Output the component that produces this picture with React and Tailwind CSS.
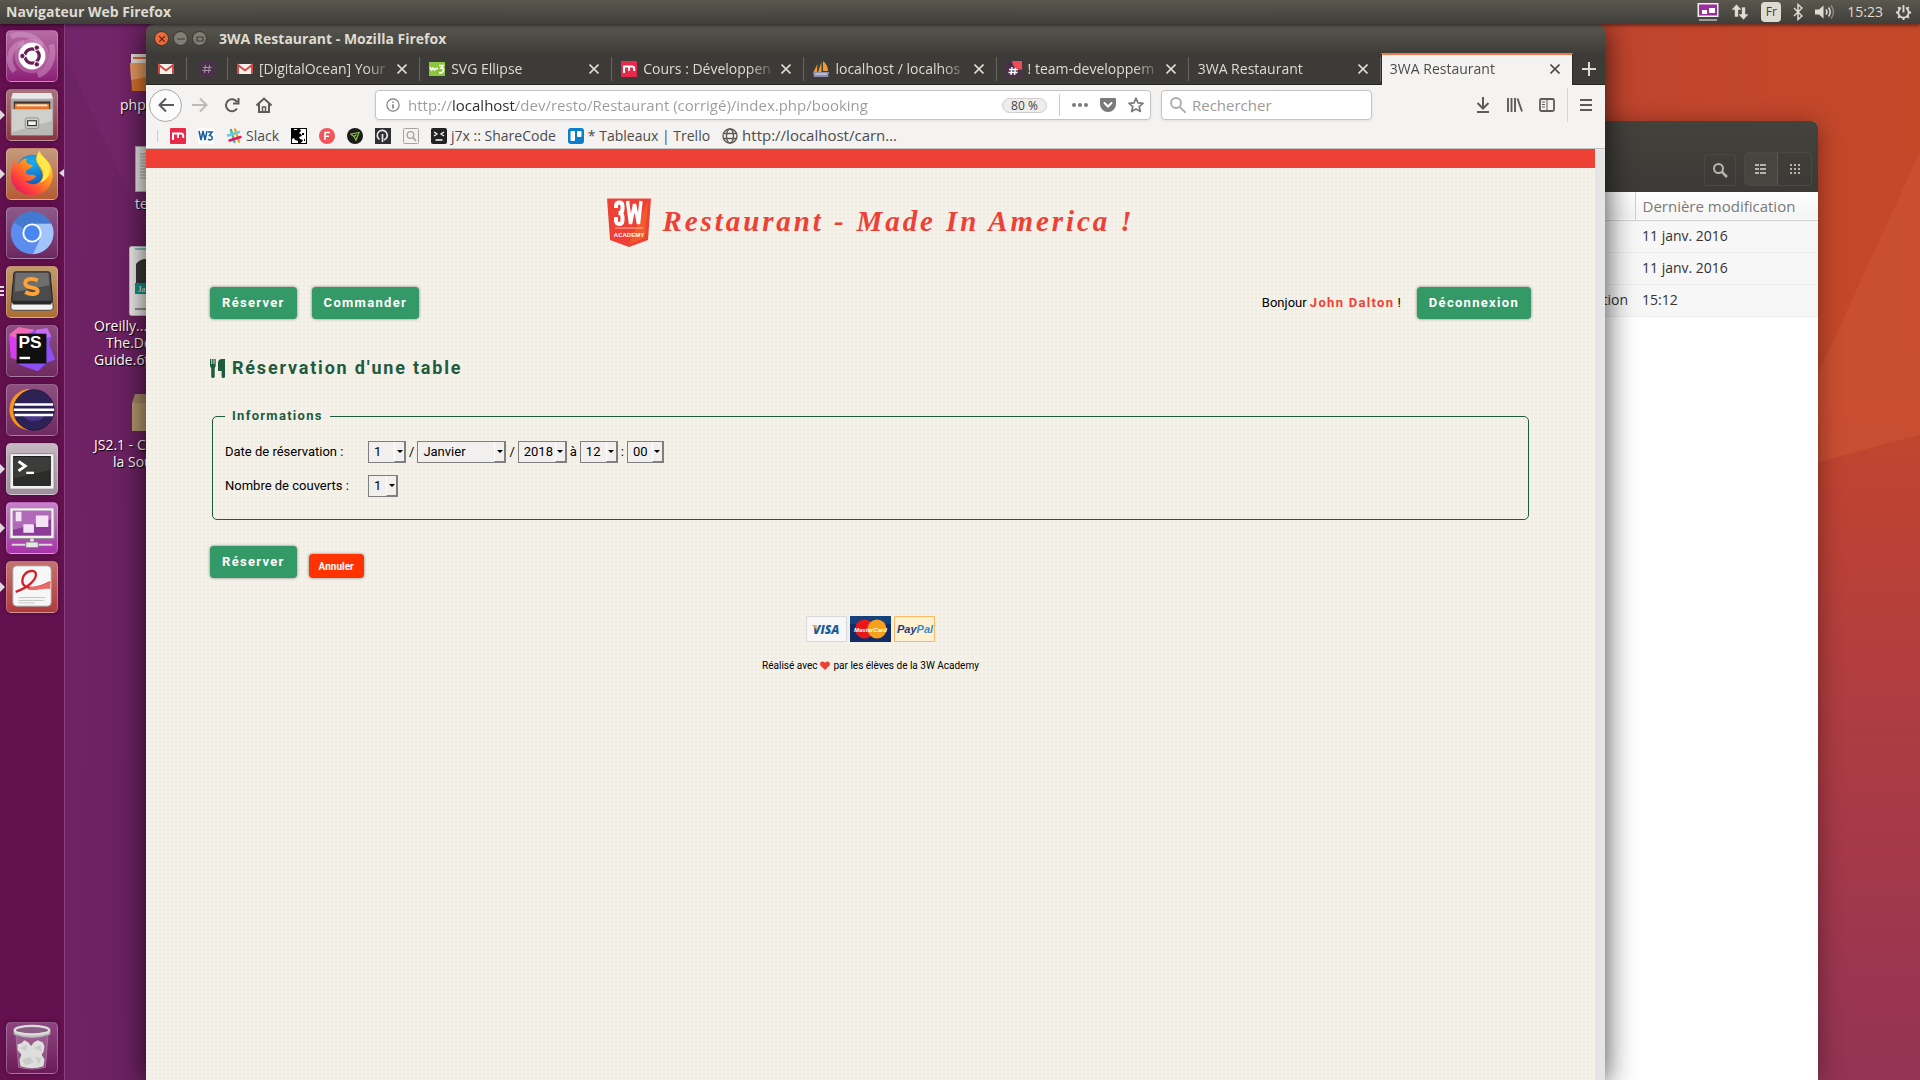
import React from "react";

const UI = "font-['Open_Sans','Noto_Sans',sans-serif]";
const KARLA = "font-['Roboto','Liberation_Sans',sans-serif]";

/* ---------- launcher ---------- */

function Tile({ label, tint, left = 0, active, children }) {
  return (
    <li className="relative flex w-full justify-center">
      {left === 1 && (
        <span className="absolute top-[21px] left-0 border-y-[5px] border-l-[5px] border-y-transparent border-l-[#e0d8dc]" />
      )}
      {left === 3 && (
        <span className="absolute top-5 left-0 flex flex-col gap-0.5">
          <i className="h-0.5 w-1 bg-[#e0d8dc]" />
          <i className="h-0.5 w-1 bg-[#e0d8dc]" />
          <i className="h-0.5 w-1 bg-[#e0d8dc]" />
        </span>
      )}
      {active && (
        <span className="absolute top-[21px] right-0 border-y-4 border-r-[5px] border-y-transparent border-r-[#e0d8dc]" />
      )}
      <button
        aria-label={label}
        className={
          "flex h-[52px] w-[52px] items-center justify-center rounded-[5px] border border-white/25 bg-gradient-to-b shadow-[0_0_4px_rgba(0,0,0,0.3)] " +
          tint
        }
      >
        {children}
      </button>
    </li>
  );
}

const Ubuntu = () => (
  <svg viewBox="0 0 52 52" className="h-[50px] w-[50px]">
    <path d="M4 6C16 0 32 6 36 16M46 14c4 14-2 28-14 32M8 42C-2 30 4 14 18 12" stroke="#d9a3cc" strokeOpacity=".45" strokeWidth="6" fill="none" />
    <circle cx="26" cy="26" r="18" fill="#d7a0cb" fillOpacity=".35" />
    <circle cx="26" cy="26" r="14" fill="#fff" />
    <circle cx="26" cy="26" r="7.5" fill="none" stroke="#6b1d56" strokeWidth="3.4" />
    <path d="M26 26 14 26M26 26l6-10.4M26 26l6 10.4" stroke="#fff" strokeWidth="1.4" />
    <g fill="#6b1d56" stroke="#fff" strokeWidth="1">
      <circle cx="16" cy="26" r="2.8" />
      <circle cx="31" cy="17.3" r="2.8" />
      <circle cx="31" cy="34.7" r="2.8" />
    </g>
  </svg>
);

const FilesIcon = () => (
  <svg viewBox="0 0 52 52" className="h-[50px] w-[50px]">
    <path d="M6 3h40l2 7H4z" fill="#e8e8e8" />
    <path d="M4 9h44v38H4z" fill="#a9a9a7" />
    <path d="M7 12h38v10H7z" fill="#3a2f2a" />
    <path d="M8 14h36v6H8z" fill="#e8762a" />
    <path d="M10 15h32v2H10z" fill="#fbe9d5" />
    <path d="M5 20h42v27H5z" fill="#b9b9b7" />
    <path d="M5 20h42v12L5 44z" fill="#dededc" fillOpacity=".6" />
    <rect x="19" y="29" width="14" height="11" rx="2" fill="#cfcfcd" stroke="#8c8c8a" />
    <rect x="21.500" y="32" width="9" height="5" fill="#f4f4f4" stroke="#333" strokeWidth="1.200" />
  </svg>
);

const FirefoxIcon = () => (
  <svg viewBox="0 0 52 52" className="h-[50px] w-[50px]">
    <defs>
      <linearGradient id="fx" x1="0.9" y1="0" x2="0.1" y2="1">
        <stop offset="0" stopColor="#fff14f" />
        <stop offset=".4" stopColor="#ff9a1c" />
        <stop offset=".75" stopColor="#ff3b3f" />
        <stop offset="1" stopColor="#d5136b" />
      </linearGradient>
      <radialGradient id="fxb" cx=".5" cy=".2" r=".9">
        <stop offset="0" stopColor="#18b0f5" />
        <stop offset="1" stopColor="#123f9c" />
      </radialGradient>
    </defs>
    <circle cx="27" cy="24" r="18" fill="url(#fxb)" />
    <path d="M34 2c0 5 11 10 13 20 3 15-8 26-21 26C13 48 4 39 4 27c0-7 3-9 3-15 2 1 4 3 4 4 3-4 6-6 10-6-1 2-1 4 0 5 2 1 4 1 6 2-1 3-6 4-7 6-1 3 1 3 3 4 3 0 6-1 7 2-3 2-5 5-11 4 4 5 13 5 17-1 4-7-3-13-5-18-2-4 0-9 3-12z" fill="url(#fx)" />
    <path d="M34 2c-6 8-2 12 2 18 3 6 2 11-2 15 8-2 12-10 11-16C44 11 35 8 34 2z" fill="#ffe84a" />
  </svg>
);

const ChromiumIcon = () => (
  <svg viewBox="0 0 52 52" className="h-[50px] w-[50px]">
    <circle cx="26" cy="26" r="22" fill="#5b8def" />
    <path d="M26 16h20A22 22 0 0 1 27 48l8-17z" fill="#a3c3fb" />
    <path d="M26 4a22 22 0 0 1 20 12H26a10 10 0 0 0-9 5L7 15A22 22 0 0 1 26 4z" fill="#4479d0" />
    <circle cx="26" cy="26" r="10" fill="#fff" />
    <circle cx="26" cy="26" r="8" fill="#4a86f0" />
  </svg>
);

const SublimeIcon = () => (
  <svg viewBox="0 0 52 52" className="h-[50px] w-[50px]">
    <path d="M6 18 4 42q0 3 3 3h38q3 0 3-3l-2-24z" fill="#f4f4f4" stroke="#444" />
    <path d="M9 5h34q2 0 2 2l2 28q0 3-3 3H8q-3 0-3-3L7 7q0-2 2-2z" fill="#4b4b4b" stroke="#222" />
    <path d="M9 6h34l1 13L8 26z" fill="#7d7d7d" fillOpacity=".7" />
    <path d="M6 35h40v4H6z" fill="#2a2a2a" />
    <path d="M32 14c-6-3-13-2-13 3 0 6 13 3 13 8 0 4-8 4-13 1" fill="none" stroke="#ffa336" strokeWidth="4" />
  </svg>
);

const PhpStormIcon = () => (
  <svg viewBox="0 0 52 52" className="h-[50px] w-[50px]">
    <path d="m2 9 10-8 16 3-6 30H8z" fill="#f26bb8" />
    <path d="m2 9 8 4v22l-6-2z" fill="#d63ff0" />
    <path d="m28 5 14-2 4 8-2 8 6 16-8 3-10 9-20-7L10 14z" fill="#8b50f5" />
    <path d="M30 4 42 2l4 9-16 4z" fill="#c56cf6" />
    <rect x="10" y="8" width="31" height="31" fill="#101010" />
    <text x="12" y="23" fontFamily="Liberation Sans" fontWeight="700" fontSize="18" fill="#fff">PS</text>
    <path d="M13 32h11v2.500H13z" fill="#fff" />
  </svg>
);

const EclipseIcon = () => (
  <svg viewBox="0 0 52 52" className="h-[50px] w-[50px]">
    <path d="M24 4a21.500 21.500 0 0 0 0 43A24 24 0 0 1 24 4z" fill="#f7941e" />
    <circle cx="28" cy="26" r="21" fill="#2c2255" stroke="#20193f" />
    <path d="M17 32a12 9 0 0 0 22 0z" fill="#4a3a8c" />
    <path d="M8 19h40v2.500H8zM7 24.500h42V27H7zM8 30h40v2.500H8z" fill="#fff" />
  </svg>
);

const TerminalIcon = () => (
  <svg viewBox="0 0 52 52" className="h-[50px] w-[50px]">
    <rect x="3" y="10" width="46" height="37" rx="1" fill="#f0f0f0" stroke="#888" />
    <rect x="7" y="13" width="38" height="30" fill="#2c2c2b" stroke="#111" />
    <path d="M7 13h38v14L7 36z" fill="#fff" fillOpacity=".08" />
    <path d="m12 18 7 5-7 5" fill="none" stroke="#fff" strokeWidth="3" />
    <path d="M20 30h8" stroke="#fff" strokeWidth="2.400" />
  </svg>
);

const ScreenIcon = () => (
  <svg viewBox="0 0 52 52" className="h-[50px] w-[50px]">
    <rect x="3" y="5" width="46" height="32" rx="1" fill="#f1f1ef" stroke="#8d8d8a" />
    <rect x="6" y="8" width="40" height="26" fill="#8c3b97" />
    <path d="M6 8h40v9L6 28z" fill="#c98bcf" fillOpacity=".6" />
    <path d="M9 9h6v10H9zM30 13h13v12H30zM17 22h11v9H17z" fill="#f4e3f4" />
    <path d="M24 37h4v4h-4z" fill="#ddd" />
    <path d="M5 43.500h42" stroke="#d8d8d6" strokeWidth="2" />
    <rect x="19.500" y="40.500" width="13" height="6" rx="1" fill="#e6e6e4" stroke="#777" />
  </svg>
);

const EvinceIcon = () => (
  <svg viewBox="0 0 52 52" className="h-[50px] w-[50px]">
    <rect x="6" y="4" width="40" height="42" rx="4" fill="#f6f6f6" stroke="#999" />
    <path d="M9 31C22 27 31 18 30 12c-1-4-9-4-13 3-3 8 1 12 9 12 8 0 13-3 19-6" fill="none" stroke="#d6202a" strokeWidth="2.400" />
    <path d="M24 26c8 0 14-2 21-6v8c-8-1-14 2-23 1z" fill="#ea6a66" />
    <path d="M12 37h28M12 40h26M12 42.500h17" stroke="#c4c4c4" />
  </svg>
);

const TrashIcon = () => (
  <svg viewBox="0 0 52 52" className="h-[50px] w-[50px]">
    <path d="m9 9 3 37q14 4 28 0l3-37z" fill="#d8c0d3" fillOpacity=".28" stroke="#c9b4c6" strokeOpacity=".4" />
    <path d="m11 22 4-1 3-3 4 2 3 4 3-4 4-2 5 2 2 4-1 6-2 3 3 5-1 7q-12 4-24 0l-1-7 2-5-4-5z" fill="#dededc" />
    <path d="m14 26 7-4-1 7zM28 26l7-3 1 7zM16 38l8-3 4 6-9 3zM29 35l7 2-3 6z" fill="#cbcbc9" />
    <path d="M7 8v4q19 7 38 0V8q-19 7-38 0z" fill="#b9b9b7" />
    <ellipse cx="26" cy="7.500" rx="18" ry="4.500" fill="#8a5f84" stroke="#dcdcda" strokeWidth="2.500" />
  </svg>
);

function Launcher() {
  return (
    <nav aria-label="Lanceur" className="relative z-0 flex w-[65px] shrink-0 flex-col border-r border-[#84437a] bg-[#63104f] pt-1.5 pb-1.5">
      <ul className="flex flex-1 flex-col gap-[7px]">
        <Tile label="Ubuntu" tint="from-[#b66ba5] to-[#8d1d78]"><Ubuntu /></Tile>
        <Tile label="Fichiers" tint="from-[#a8737b] to-[#8a3440]" left={1}><FilesIcon /></Tile>
        <Tile label="Firefox" tint="from-[#c59a7c] to-[#b35c34]" left={1} active><FirefoxIcon /></Tile>
        <Tile label="Chromium" tint="from-[#8d5a8a] to-[#6b2860]"><ChromiumIcon /></Tile>
        <Tile label="Sublime Text" tint="from-[#c19a6c] to-[#ab6f33]" left={3}><SublimeIcon /></Tile>
        <Tile label="PhpStorm" tint="from-[#8d4f80] to-[#6f2a60]"><PhpStormIcon /></Tile>
        <Tile label="Eclipse" tint="from-[#8d4f80] to-[#6f2a60]"><EclipseIcon /></Tile>
        <Tile label="Terminal" tint="from-[#c4b8c2] to-[#9f8f9c]" left={1}><TerminalIcon /></Tile>
        <Tile label="Partage d'écran" tint="from-[#c77fcb] to-[#a732a8]" left={1}><ScreenIcon /></Tile>
        <Tile label="Visionneur" tint="from-[#c67070] to-[#b03a3c]" left={1}><EvinceIcon /></Tile>
        <li className="flex-1" />
        <Tile label="Corbeille" tint="from-[#8d4580] to-[#6b1a5a]"><TrashIcon /></Tile>
      </ul>
    </nav>
  );
}

/* ---------- top panel ---------- */

function Panel() {
  return (
    <header className="relative z-30 flex h-6 items-center justify-between bg-gradient-to-b from-[#5a584f] to-[#3f3e39] pr-2 pl-1.5 text-[#dfdbd2] shadow-[0_1px_4px_rgba(0,0,0,0.6)]">
      <span className="text-sm font-bold">Navigateur Web Firefox</span>
      <div className="flex items-center gap-3">
        <svg viewBox="0 0 22 20" className="h-5 w-[22px]">
          <rect x=".5" y="1" width="21" height="14" fill="#eee" />
          <rect x="2" y="2.500" width="18" height="11" fill="#9b2fa0" />
          <path d="M5 8h5v4H5zM12 6h6v5h-6z" fill="#fff" />
          <path d="M2 18h18M8 18h6" stroke="#bbb" strokeWidth="1.500" />
        </svg>
        <svg viewBox="0 0 18 18" className="h-[18px] w-[18px]" fill="#dfdbd2">
          <path d="M5.500 1 11 7H7.500v7h-4V7H0zM12.500 17 7 11h3.500V4h4v7H18z" stroke="#47463f" strokeWidth=".6" />
        </svg>
        <span className="flex h-5 w-5 items-center justify-center rounded-sm bg-[#dfdbd2] text-xs text-[#3c3b37]">Fr</span>
        <svg viewBox="0 0 10 18" className="h-[18px] w-2.5" fill="none" stroke="#dfdbd2" strokeWidth="1.500">
          <path d="m1 5 8 8-4 3.500v-15L9 5l-8 8" />
        </svg>
        <svg viewBox="0 0 20 16" className="h-4 w-5" fill="none" stroke="#dfdbd2" strokeWidth="1.600">
          <path d="M0 5.500h4l4.500-4v13l-4.500-4H0z" fill="#dfdbd2" stroke="none" />
          <path d="M11 5.500q2 2.500 0 5M13.500 3.500q3.500 4.500 0 9" />
          <path d="M16 1.500q5 6.500 0 13" opacity=".4" />
        </svg>
        <time className="text-sm">15:23</time>
        <svg viewBox="0 0 18 18" className="h-[17px] w-[17px]" fill="none" stroke="#dfdbd2">
          <circle cx="9" cy="9" r="5.500" strokeWidth="2" />
          <path d="M9 0v9" stroke="#4b4a43" strokeWidth="5" />
          <path d="M9 1v8" strokeWidth="2" />
          <path d="M1 9h3M14 9h3M9 17v-3M3.300 3.300l2 2M14.700 3.300l-2 2M3.300 14.700l2-2M14.700 14.700l-2-2" strokeWidth="2" />
        </svg>
      </div>
    </header>
  );
}

/* ---------- desktop ---------- */

function Wallpaper() {
  return (
    <svg aria-hidden="true" preserveAspectRatio="none" viewBox="0 0 1920 1080" className="absolute inset-0 h-full w-full">
      <defs>
        <linearGradient id="wl" x1="0" y1="0" x2="1" y2="0">
          <stop offset="0" stopColor="#6f2469" />
          <stop offset=".08" stopColor="#6c2160" />
          <stop offset=".8" stopColor="#c0442f" />
          <stop offset="1" stopColor="#c54829" />
        </linearGradient>
        <linearGradient id="wr" x1="0" y1="0" x2="0" y2="1">
          <stop offset=".3" stopColor="#c3452c" stopOpacity="0" />
          <stop offset=".45" stopColor="#bd4234" />
          <stop offset=".7" stopColor="#ab3b44" />
          <stop offset="1" stopColor="#933355" />
        </linearGradient>
      </defs>
      <path d="M0 0h1920v1080H0z" fill="url(#wl)" />
      <path d="M1500 0h420v1080h-420z" fill="url(#wr)" />
      <path d="M1920 131 1800 398v55l120-33z" fill="#cf5335" fillOpacity=".6" />
      <path d="M65 32 146 212V0H65z" fill="#7a2b73" fillOpacity=".35" />
    </svg>
  );
}

function DesktopIcons() {
  const label = "whitespace-nowrap text-sm leading-[17px] text-white [text-shadow:1px_1px_1px_#000]";
  return (
    <div>
      <div className="absolute top-[30px] left-[120px] flex flex-col gap-1">
        <svg viewBox="0 0 48 38" className="ml-2.5 h-[38px] w-12">
          <path d="M1 0h46v12H1z" fill="#e8e3dd" />
          <path d="M3 3h44v2H3z" fill="#dc6b3a" />
          <path d="M0 9h48v28H2z" fill="#d8752f" />
          <path d="M0 9h48v8L1 26z" fill="#f3b176" fillOpacity=".7" />
        </svg>
        <span className={label}>php</span>
      </div>
      <div className="absolute top-[122px] left-[135px] flex flex-col gap-[3px]">
        <svg viewBox="0 0 40 46" className="h-[46px] w-10">
          <path d="M.5.500h39v45H.5z" fill="#ecebe9" stroke="#aaa" />
          <path d="M5 8h30M5 11h30M5 14h30M5 17h30M5 20h30M5 23h30M5 26h30M5 29h30M5 32h30" stroke="#aaa" />
        </svg>
        <span className={label}>test</span>
      </div>
      <div className="absolute top-[222px] left-[94px] flex flex-col">
        <svg viewBox="0 0 50 70" className="ml-[35px] h-[70px] w-[50px]">
          <rect x=".5" y=".5" width="49" height="69" rx="2" fill="#f0efec" stroke="#bbb" />
          <path d="M6 3h40" stroke="#1b9a94" />
          <path d="M7 18q6-7 14-4l20 3v20H7z" fill="#3a3a3a" />
          <path d="M6 37h40v11H6z" fill="#14938c" />
          <text x="9" y="46" fontFamily="Liberation Serif" fontSize="9" fill="#fff">Java</text>
          <path d="M6 63h12" stroke="#777" strokeWidth="1.500" />
        </svg>
        <span className={label + " mt-px"}>Oreilly...</span>
        <span className={label + " pl-3"}>The.Def</span>
        <span className={label}>Guide.6th</span>
      </div>
      <div className="absolute top-[370px] left-[94px] flex flex-col">
        <svg viewBox="0 0 48 38" className="mb-1 ml-9 h-[38px] w-12">
          <path d="M5 0h38l4 9H2z" fill="#a58a66" />
          <path d="M2 9h45v28H2z" fill="#b99a70" />
        </svg>
        <span className={label}>JS2.1 - Co</span>
        <span className={label + " pl-[19px]"}>la Sou</span>
      </div>
    </div>
  );
}

function FileRow({ name, date }) {
  return (
    <tr className="h-8 border-b border-[#ececec] bg-[#f7f7f7]">
      <td className="pr-[7px] text-right">{name}</td>
      <td className="pl-[7px]">{date}</td>
    </tr>
  );
}

function FileManager() {
  return (
    <section aria-label="Fichiers" className="absolute top-[97px] right-[102px] bottom-0 flex w-[420px] flex-col overflow-hidden rounded-t-md bg-white shadow-[0_4px_24px_rgba(0,0,0,0.4)]">
      <div className="flex h-[71px] shrink-0 items-end justify-end gap-2 bg-gradient-to-b from-[#43423d] to-[#3b3a36] pr-1.5 pb-1.5">
        <button aria-label="Rechercher un fichier" className="flex h-8 w-8 items-center justify-center rounded border border-[#4a4944]">
          <svg viewBox="0 0 16 16" className="h-4 w-4" fill="none" stroke="#b7b5ab" strokeWidth="2">
            <circle cx="6.500" cy="6.500" r="4.500" />
            <path d="m10 10 5 5" strokeWidth="2.500" />
          </svg>
        </button>
        <div className="flex h-[34px] overflow-hidden rounded border border-[#4a4944]">
          <button aria-label="Liste" className="flex w-[33px] items-center justify-center border-r border-[#5a5953] bg-[#464540]">
            <svg viewBox="0 0 12 12" className="h-3 w-3" fill="#b7b5ab">
              <path d="M0 1h4v2H0zM5 1h6v2H5zM0 5h4v2H0zM5 5h6v2H5zM0 9h4v2H0zM5 9h6v2H5z" />
            </svg>
          </button>
          <button aria-label="Grille" className="flex w-[33px] items-center justify-center">
            <svg viewBox="0 0 12 12" className="h-3 w-3" fill="#b7b5ab">
              <path d="M1 1h2v2H1zM5 1h2v2H5zM9 1h2v2H9zM1 5h2v2H1zM5 5h2v2H5zM9 5h2v2H9zM1 9h2v2H1zM5 9h2v2H5zM9 9h2v2H9z" />
            </svg>
          </button>
        </div>
      </div>
      <table className="w-full table-fixed border-collapse text-sm text-[#333]">
        <thead>
          <tr className="h-7 border-b border-[#cfcfcf] bg-gradient-to-b from-white to-[#f4f4f4] text-[15px] leading-5 text-[#7a7a78]">
            <th scope="col" className="border-r border-[#cfcfcf] font-normal"></th>
            <th scope="col" className="w-[183px] pl-[7px] text-left font-normal">Dernière modification</th>
          </tr>
        </thead>
        <tbody>
          <FileRow name="" date="11 janv. 2016" />
          <FileRow name="" date="11 janv. 2016" />
          <FileRow name="Documentation" date="15:12" />
        </tbody>
      </table>
    </section>
  );
}

/* ---------- favicons ---------- */

const Gmail = () => (
  <svg viewBox="0 0 16 16" className="h-4 w-4 shrink-0">
    <path d="M1 3h14v10H1z" fill="#f1eeec" />
    <path d="M1 13V4l7 5.500L15 4v9" fill="none" stroke="#d54a3f" strokeWidth="2" />
    <path d="M3 13v-6l5 4 5-4v6z" fill="#f4f1ef" />
  </svg>
);
const SlackTab = () => (
  <svg viewBox="0 0 16 16" className="h-4 w-4 shrink-0">
    <path d="M0 0h16v16H0z" fill="#4a3349" />
    <path d="M6.500 4 5.500 12M10.500 4l-1 8M4 6.500h8.500M3.500 9.500H12" stroke="#a493a3" strokeWidth="1" />
  </svg>
);
const W3Green = () => (
  <svg viewBox="0 0 16 16" className="h-4 w-4 shrink-0">
    <path d="M0 1h16v14H0z" fill="#8cc63f" />
    <path d="m1 6 1.500 3L4 7l1.500 2L7 7.500h2M10 4.500h4L12 7q3 0 2.500 2.500T10 12" fill="none" stroke="#fff" strokeWidth="1.500" />
  </svg>
);
const MRed = () => (
  <svg viewBox="0 0 16 16" className="h-4 w-4 shrink-0">
    <rect width="16" height="16" rx="1" fill="#e9294a" />
    <path d="M3 12V5.500h8q2.200 0 2.200 2V10" fill="none" stroke="#fff" strokeWidth="2" />
    <path d="M8 5.500V10" stroke="#fff" strokeWidth="1.800" />
  </svg>
);
const PhpMyAdmin = () => (
  <svg viewBox="0 0 16 16" className="h-4 w-4 shrink-0">
    <path d="M4.500 3 4 11H.5zM8.500 1v10H5zM10 0q5 4 5 10h-5z" fill="#f29b30" />
    <path d="M0 11h16l-1 5H1z" fill="#8d8fae" />
    <path d="M2 13h12" stroke="#e5e5f0" />
  </svg>
);
const SlackRed = () => (
  <svg viewBox="0 0 16 16" className="h-4 w-4 shrink-0">
    <path d="M0 0h16v16H0z" fill="#4a2f4b" />
    <path d="M6 6 5 14M9.500 6l-1 8M3 8.500h9M2.500 11.500h9" stroke="#fff" strokeWidth="1.400" />
    <path d="M6 0h10v9Q7 9 6 0z" fill="#ee4a5a" />
  </svg>
);

/* ---------- Firefox ---------- */

function Cross() {
  return (
    <svg viewBox="0 0 10 10" className="h-2.5 w-2.5" fill="none" stroke="currentColor" strokeWidth="1.600">
      <path d="m.5.500 9 9M9.500.500l-9 9" />
    </svg>
  );
}

function Tab({ icon, title, active }) {
  return (
    <div
      className={
        active
          ? "flex min-w-0 flex-1 items-center border-x border-t-2 border-x-[#2a2926] border-t-[#f07746] bg-[#f4f3f2] pr-3 pb-0.5 pl-2 text-[#4c4c4c]"
          : "my-1 flex min-w-0 flex-1 items-center border-r border-[#67655e] pr-3 pl-[9px] text-[#dfdbd2]"
      }
    >
      {icon && <span className="mr-1.5 shrink-0">{icon}</span>}
      <span className="min-w-0 flex-1 text-sm whitespace-nowrap [mask-image:linear-gradient(to_right,#000_calc(100%-28px),transparent)]">
        {title}
      </span>
      <button aria-label={"Fermer l'onglet " + title} className="ml-1 shrink-0">
        <Cross />
      </button>
    </div>
  );
}

function TabStrip() {
  return (
    <div className="flex h-8 shrink-0 border-b border-[#252522] bg-[#3c3b37]">
      <button aria-label="Gmail" className="my-1 flex w-[41px] items-center justify-center border-r border-[#67655e]"><Gmail /></button>
      <button aria-label="Slack" className="my-1 flex w-[41px] items-center justify-center border-r border-[#67655e]"><SlackTab /></button>
      <div className="-mb-px flex min-w-0 flex-1">
        <Tab icon={<Gmail />} title="[DigitalOcean] Your" />
        <Tab icon={<W3Green />} title="SVG Ellipse" />
        <Tab icon={<MRed />} title="Cours : Développen" />
        <Tab icon={<PhpMyAdmin />} title="localhost / localhos" />
        <Tab icon={<SlackRed />} title="! team-developpem" />
        <Tab title="3WA Restaurant" />
        <Tab title="3WA Restaurant" active />
      </div>
      <button aria-label="Nouvel onglet" className="flex w-8 items-center justify-center text-[#dfdbd2]">
        <svg viewBox="0 0 14 14" className="h-3.5 w-3.5" stroke="currentColor" strokeWidth="2"><path d="M7 0v14M0 7h14" /></svg>
      </button>
    </div>
  );
}

function TitleBar() {
  const dot = "flex h-[15px] w-[15px] items-center justify-center rounded-full border border-[#35342f]";
  return (
    <div className="flex h-[29px] shrink-0 items-center gap-1 bg-gradient-to-b from-[#5a584f] to-[#3e3d39] pl-2">
      <button aria-label="Fermer" className={dot + " bg-[#ee683a] text-[#5a2410]"}>
        <svg viewBox="0 0 6 6" className="h-1.5 w-1.5" stroke="currentColor" strokeWidth="1.200"><path d="m0 0 6 6M6 0 0 6" /></svg>
      </button>
      <button aria-label="Réduire" className={dot + " bg-[#807e75] text-[#3c3b37]"}>
        <svg viewBox="0 0 8 6" className="h-1.5 w-2" stroke="currentColor" strokeWidth="1.200"><path d="M0 3h8" /></svg>
      </button>
      <button aria-label="Agrandir" className={dot + " bg-[#807e75] text-[#3c3b37]"}>
        <svg viewBox="0 0 8 6" className="h-1.5 w-2" fill="none" stroke="currentColor" strokeWidth="1.200"><path d="M1 1h6v4H1z" /></svg>
      </button>
      <h1 className="ml-2 text-sm font-bold text-[#dfdbd2]">3WA Restaurant - Mozilla Firefox</h1>
    </div>
  );
}

function NavBar() {
  const s = "h-4 w-4";
  return (
    <div className="flex h-10 shrink-0 items-center bg-[#f4f3f2] pr-[11px] pl-[3px] text-[#5c5b59]">
      <button aria-label="Précédent" className="flex h-[33px] w-[33px] items-center justify-center rounded-full border border-[#a9a8a6] bg-[#fbfbfb]">
        <svg viewBox="0 0 16 16" className={s} fill="none" stroke="currentColor" strokeWidth="2"><path d="M16 8H1M8 1.500 1.500 8 8 14.500" /></svg>
      </button>
      <button aria-label="Suivant" className="ml-2.5 text-[#bcbbb9]">
        <svg viewBox="0 0 16 16" className={s} fill="none" stroke="currentColor" strokeWidth="2"><path d="M0 8h15M8 1.500 14.500 8 8 14.500" /></svg>
      </button>
      <button aria-label="Actualiser" className="ml-4">
        <svg viewBox="0 0 16 16" className={s} fill="none" stroke="currentColor" strokeWidth="2"><path d="M13 11.500A6 6 0 1 1 13 5M14.500 1v5.500H9" /></svg>
      </button>
      <button aria-label="Accueil" className="ml-4">
        <svg viewBox="0 0 16 16" className={s} fill="none" stroke="currentColor" strokeWidth="2"><path d="m.5 8.500 7.500-7 7.500 7M3 7v8h10V7" /><path d="M6.500 15v-5h3v5" strokeWidth="1.500" /></svg>
      </button>
      <div className="ml-[103px] flex h-[30px] min-w-0 flex-1 items-center rounded border border-[#c5c4c2] bg-white pr-1.5 pl-2.5 shadow-[0_1px_3px_rgba(0,0,0,0.08)]">
        <svg viewBox="0 0 16 16" className="h-3.5 w-3.5 shrink-0" fill="none" stroke="#7b7a78" strokeWidth="1.300"><circle cx="8" cy="8" r="7" /><path d="M8 7v5M8 4v1.500" strokeWidth="1.800" /></svg>
        <input
          aria-label="Adresse"
          defaultValue="http://localhost/dev/resto/Restaurant (corrigé)/index.php/booking"
          className="ml-2 min-w-0 flex-1 bg-[linear-gradient(to_right,#9c9b99_45px,#2a2a2a_45px,#2a2a2a_108px,#9c9b99_108px)] bg-clip-text text-[15px] text-transparent outline-none"
        />
        <button className="w-[45px] rounded-full border border-[#cfcecc] bg-[#eeedec] text-xs leading-[13px] text-[#3f3f3f]">80 %</button>
        <span className="mx-3 h-[22px] w-px bg-[#cfcecc]" />
        <button aria-label="Actions" className="w-4">
          <svg viewBox="0 0 16 16" className={s} fill="#7b7a78"><circle cx="2" cy="8" r="2" /><circle cx="8" cy="8" r="2" /><circle cx="14" cy="8" r="2" /></svg>
        </button>
        <button aria-label="Pocket" className="ml-3">
          <svg viewBox="0 0 16 16" className={s}><path d="M1 1h14q1 0 1 1v5a8 8 0 0 1-16 0V2q0-1 1-1z" fill="#7b7a78" /><path d="m4.500 6 3.500 3.500L11.500 6" fill="none" stroke="#fff" strokeWidth="2" strokeLinecap="round" /></svg>
        </button>
        <button aria-label="Marquer cette page" className="ml-3">
          <svg viewBox="0 0 16 16" className={s} fill="none" stroke="#7b7a78" strokeWidth="1.700" strokeLinejoin="round"><path d="m8 1.200 2 4.600 5 .5-3.800 3.300L12.400 14.500 8 11.900l-4.400 2.600L4.800 9.600 1 6.300l5-.5z" /></svg>
        </button>
      </div>
      <label className="ml-2.5 flex h-[30px] w-[211px] items-center rounded border border-[#c5c4c2] bg-white px-2 shadow-[0_1px_3px_rgba(0,0,0,0.08)]">
        <svg viewBox="0 0 16 16" className={s + " shrink-0"} fill="none" stroke="#aaa9a7" strokeWidth="1.800"><circle cx="6" cy="6" r="5" /><path d="m9.800 9.800 6 6" /></svg>
        <input aria-label="Rechercher" placeholder="Rechercher" className="ml-1.5 w-full min-w-0 bg-transparent text-[15px] outline-none placeholder:text-[#9c9b99]" />
      </label>
      <button aria-label="Téléchargements" className="ml-[103px]">
        <svg viewBox="0 0 16 16" className={s} fill="none" stroke="currentColor" strokeWidth="2"><path d="M8 0v11M2.500 6 8 11.500 13.500 6M2 15h12" /></svg>
      </button>
      <button aria-label="Bibliothèque" className="ml-4">
        <svg viewBox="0 0 16 16" className={s} fill="none" stroke="currentColor" strokeWidth="1.900"><path d="M1 1v14M4.500 1v14M8 1v14M10.500 1.500l4.500 13" /></svg>
      </button>
      <button aria-label="Panneaux latéraux" className="ml-4">
        <svg viewBox="0 0 16 16" className={s} fill="none" stroke="currentColor" strokeWidth="1.800"><rect x="1" y="2" width="14" height="12" rx="1.500" /><path d="M8 2v12M3 5h3M3 7.500h3M3 10h3" strokeWidth="1" /></svg>
      </button>
      <span className="mx-3 h-[34px] w-px bg-[#d8d7d5]" />
      <button aria-label="Menu" className="w-3.5">
        <svg viewBox="0 0 12 14" className="h-3.5 w-3" stroke="currentColor" strokeWidth="2"><path d="M0 2h12M0 7h12M0 12h12" /></svg>
      </button>
    </div>
  );
}

const bookmarks = [
  { name: "Mooc", icon: <MRed /> },
  {
    name: "W3Schools",
    icon: (
      <svg viewBox="0 0 16 16" className="h-4 w-4"><path d="M0 0h16v16H0z" fill="#fff" /><path d="m1 3 2 9 2-9 2 9 2-9M10 4h4l-2.500 3.500Q15 8 14 11q-2 2-4 0" fill="none" stroke="#1b5fa5" strokeWidth="1.600" /></svg>
    ),
  },
  {
    name: "Slack",
    text: "Slack",
    icon: (
      <svg viewBox="0 0 16 16" className="h-4 w-4" strokeWidth="2.400" strokeLinecap="round"><path d="m5 2 3.500 12" stroke="#3eb991" /><path d="m9 1.500 4 12" stroke="#e9a820" /><path d="M2 7.500 13 4" stroke="#70cadb" /><path d="M3.500 12.500 14.500 9" stroke="#e01765" /></svg>
    ),
  },
  {
    name: "Dossier",
    icon: (
      <svg viewBox="0 0 16 16" className="h-4 w-4"><path d="M0 0h16v16H0z" fill="#000" /><path d="M9 1h6v14H9l2-1 1-2-3-1-1-2 3-1-1-2-2-1 2-2zM1 11l2-1 1 2 3 1v2H1zM3 1h3v1H3z" fill="#fff" /><path d="M11 5h2v2h-2zM13 11h1v2h-1z" fill="#000" /></svg>
    ),
  },
  {
    name: "Favori F",
    icon: (
      <svg viewBox="0 0 16 16" className="h-4 w-4"><circle cx="8" cy="8" r="8" fill="#f4535a" /><path d="M6 12V4.500h5M6 8.200h4" fill="none" stroke="#fff" strokeWidth="1.600" /></svg>
    ),
  },
  {
    name: "Favori V",
    icon: (
      <svg viewBox="0 0 16 16" className="h-4 w-4"><circle cx="8" cy="8" r="8" fill="#1b1b1b" /><path d="M3.500 6 12 4.500 9 12 7 8.500 9.500 6.500M3.500 6 7 8.500" fill="none" stroke="#8bc53f" strokeWidth="1.200" /></svg>
    ),
  },
  {
    name: "Favori P",
    icon: (
      <svg viewBox="0 0 16 16" className="h-4 w-4"><path d="M0 0h16v16H0z" fill="#2e3033" /><path d="M7.500 14V6M4.500 11.500A5 5 0 1 1 9 12" fill="none" stroke="#e8e8e8" strokeWidth="1.700" /></svg>
    ),
  },
  {
    name: "Recherche",
    icon: (
      <svg viewBox="0 0 16 16" className="h-4 w-4" fill="none" stroke="#a5a4a2"><rect x=".5" y=".5" width="15" height="15" rx="1" /><circle cx="7.500" cy="7" r="3.300" strokeWidth="1.300" /><path d="m10 9.500 3 3.500" strokeWidth="1.800" /></svg>
    ),
  },
  {
    name: "ShareCode",
    text: "j7x :: ShareCode",
    icon: (
      <svg viewBox="0 0 16 16" className="h-4 w-4"><rect width="16" height="16" rx="2" fill="#222" /><path d="m3 4 3 2-3 2M13 4l-3 2 3 2M4.500 12h7" fill="none" stroke="#fff" strokeWidth="1.300" /></svg>
    ),
  },
  {
    name: "Trello",
    text: "* Tableaux | Trello",
    icon: (
      <svg viewBox="0 0 16 16" className="h-4 w-4"><rect width="16" height="16" rx="3" fill="#0a80cc" /><rect x="2.500" y="3" width="4.500" height="10" rx="1" fill="#fff" /><rect x="9" y="3" width="4.500" height="6" rx="1" fill="#fff" /></svg>
    ),
  },
  {
    name: "localhost",
    text: "http://localhost/carn…",
    icon: (
      <svg viewBox="0 0 16 16" className="h-4 w-4" fill="none" stroke="#5c5b59" strokeWidth="1.400"><circle cx="8" cy="8" r="7" /><ellipse cx="8" cy="8" rx="3.500" ry="7" /><path d="M1.500 5.500h13M1.500 10.500h13" /></svg>
    ),
  },
];

function BookmarkBar() {
  return (
    <div className="flex h-6 shrink-0 items-center gap-3 border-b border-[#c4c3c1] bg-[#f4f3f2] pb-0.5 pl-[11px] text-sm text-[#4c4c4c]">
      <span className="h-3 w-px bg-[#d0cfcd]" />
      {bookmarks.map((b) => (
        <a key={b.name} href="#" aria-label={b.name} className="flex items-center gap-1 whitespace-nowrap last:text-[15px]">
          {b.icon}
          {b.text}
        </a>
      ))}
    </div>
  );
}

/* ---------- the restaurant page ---------- */

const green = "h-8 rounded bg-[#339966] px-3 text-[13px] font-bold tracking-widest text-white shadow-[0_0_3px_rgba(0,0,0,0.5)]";

function Choice({ id, label, options, className }) {
  return (
    <span className="relative inline-flex">
      <select
        id={id}
        aria-label={label}
        className={"h-[22px] appearance-none border border-r-2 border-[#7f7f7f] bg-[#f1f0ef] pl-[5px] text-[13px] text-black " + className}
      >
        {options.map((o) => (
          <option key={o}>{o}</option>
        ))}
      </select>
      <span className="pointer-events-none absolute top-px right-0.5 bottom-px flex w-2.5 items-center justify-center border-b border-l border-b-[#7f7f7f] border-l-white bg-[#f1f0ef]">
        <i className="border-x-[3px] border-t-[3px] border-x-transparent border-t-black" />
      </span>
    </span>
  );
}

function Badge() {
  return (
    <svg viewBox="0 0 44 49" className="h-[49px] w-11" role="img" aria-label="3W Academy">
      <path d="M0 0h44l-3 42-19 7-19-7z" fill="#ef4036" />
      <path d="M41 3 22 46l16-6z" fill="#f15a29" />
      <path d="M0 0h44v1H0z" fill="#f4a09a" />
      <g fill="none" stroke="#fff" strokeWidth="4">
        <path d="M9 10V8q0-3.500 3.200-3.500T15.500 8v3q0 4-4 4 4 0 4 4v3q0 4-3.300 4T9 22v-3" />
        <path d="m20.500 3 3 23 4-20 4 20L34 3" strokeWidth="3.400" />
      </g>
      <path d="M8 30h28" stroke="#f9b8a8" strokeWidth="1" />
      <text x="22" y="39" textAnchor="middle" fontFamily="Liberation Sans" fontWeight="700" fontSize="6" fill="#fff">ACADEMY</text>
    </svg>
  );
}

function Cutlery() {
  return (
    <svg viewBox="0 0 16 19" className="h-[19px] w-4" fill="#1e5b3e">
      <path d="M0 0h1.300v5h.9V0h1.300v5h.9V0h1.300v6.500Q5.500 8.300 4.700 9v8.500Q4.700 19 3 19t-1.800-1.500V9Q0 8.300 0 6.500zM15 0v17.500q0 1.500-1.700 1.500t-1.700-1.500V12H8V4q0-4 4-4z" />
    </svg>
  );
}

function Cards() {
  return (
    <div className="flex gap-[3px]">
      <svg viewBox="0 0 41 26" className="h-[26px] w-[41px]" role="img" aria-label="Visa">
        <path d="M.5.500h40v25H.5z" fill="#f7f7f7" stroke="#d8d8d8" />
        <text x="7" y="18" fontFamily="Open Sans" fontStyle="italic" fontWeight="800" fontSize="12" fill="#1a5a9a">VISA</text>
        <path d="M6 9h4l1 5z" fill="#f0a92b" />
      </svg>
      <svg viewBox="0 0 41 26" className="h-[26px] w-[41px]" role="img" aria-label="MasterCard">
        <path d="M0 0h41v26H0z" fill="#142a63" />
        <path d="M0 0h41v8H0z" fill="#14508c" fillOpacity=".6" />
        <circle cx="14.500" cy="13" r="9.500" fill="#e8171c" />
        <circle cx="27" cy="13" r="9.500" fill="#f7a01d" />
        <text x="20.500" y="15.500" textAnchor="middle" fontFamily="Liberation Sans" fontStyle="italic" fontWeight="700" fontSize="6" fill="#fff">MasterCard</text>
      </svg>
      <svg viewBox="0 0 41 26" className="h-[26px] w-[41px]" role="img" aria-label="PayPal">
        <path d="M.5.500h40v25H.5z" fill="#fff1d2" stroke="#fdb863" />
        <text x="3" y="17" fontFamily="Liberation Sans" fontStyle="italic" fontWeight="700" fontSize="11" fill="#1b3d7c">Pay<tspan fill="#2f8fcf">Pal</tspan></text>
      </svg>
    </div>
  );
}

function Page() {
  const days = Array.from({ length: 31 }, (_, i) => String(i + 1));
  return (
    <div
      className={
        KARLA +
        " min-w-0 flex-1 border-t-[19px] border-[#ef4036] bg-[#f4f1e9] bg-[radial-gradient(circle,#f0ece3_1px,transparent_1px)] bg-[length:4px_4px] px-16 text-[13px] text-black"
      }
    >
      <div className="mt-[30px] flex items-center justify-center gap-3 text-[#ef4036]">
        <Badge />
        <h2 className="pb-1 font-['Liberation_Serif',serif] text-[29px] leading-9 font-bold tracking-widest italic">Restaurant - Made In America !</h2>
      </div>
      <div className="mt-10 flex items-center justify-between">
        <div className="flex gap-[15px]">
          <button className={green}>Réserver</button>
          <button className={green}>Commander</button>
        </div>
        <div className="flex items-center gap-4">
          <p>
            Bonjour <strong className="tracking-widest text-[#ef4036]">John Dalton</strong> !
          </p>
          <button className={green}>Déconnexion</button>
        </div>
      </div>
      <h3 className="mt-[35px] flex items-center gap-1.5 text-lg font-bold tracking-widest text-[#1e5b3e]">
        <Cutlery />
        Réservation d'une table
      </h3>
      <form onSubmit={(e) => e.preventDefault()}>
        <fieldset className="mx-0.5 mt-[25px] rounded-[5px] border border-[#1e5b3e] px-3 pb-[22px]">
          <legend className="px-[7px] text-[13px] leading-[18px] font-bold tracking-widest text-[#1e5b3e]">Informations</legend>
          <div className="mt-4 flex items-center gap-[3px]">
            <label htmlFor="jour" className="w-[140px]">Date de réservation :</label>
            <Choice id="jour" options={days} className="w-[38px]" />
            /
            <Choice label="Mois" options={["Janvier", "Février", "Mars"]} className="w-[89px]" />
            /
            <Choice label="Année" options={["2018", "2019"]} className="w-[49px]" />
            à
            <Choice label="Heure" options={["12", "13", "14"]} className="w-[38px]" />
            :
            <Choice label="Minutes" options={["00", "15", "30", "45"]} className="w-[37px]" />
          </div>
          <div className="mt-3 flex items-center gap-[3px]">
            <label htmlFor="couverts" className="w-[140px]">Nombre de couverts :</label>
            <Choice id="couverts" options={["1", "2", "3", "4"]} className="w-[30px]" />
          </div>
        </fieldset>
        <div className="mt-[26px] flex items-end gap-3">
          <button className={green}>Réserver</button>
          <button type="reset" className="h-6 rounded bg-[#ff3300] px-2.5 text-[10px] font-bold text-white shadow-[0_0_3px_rgba(0,0,0,0.5)]">Annuler</button>
        </div>
      </form>
      <footer className="mt-[38px] flex flex-col items-center gap-4 text-[10px]">
        <Cards />
        <p className="flex items-center">
          Réalisé avec
          <svg viewBox="0 0 10 9" className="mr-1 ml-0.5 h-[9px] w-2.5" fill="#ef4036"><path d="M5 9 .7 4.700C-.7 3 .3.500 2.500.500 4 .500 5 1.800 5 1.800S6 .500 7.500.500C9.700.500 10.700 3 9.300 4.700z" /></svg>
          par les élèves de la 3W Academy
        </p>
      </footer>
    </div>
  );
}

function Firefox() {
  return (
    <section aria-label="Mozilla Firefox" className="absolute top-0 right-[315px] bottom-0 left-[146px] z-10 flex flex-col rounded-t-lg shadow-[0_4px_30px_rgba(0,0,0,0.75)]">
      <div className="flex min-h-0 flex-1 flex-col overflow-hidden rounded-t-lg">
        <TitleBar />
        <TabStrip />
        <NavBar />
        <BookmarkBar />
        <div className="flex min-h-0 flex-1">
          <Page />
          <div className="w-2.5 shrink-0 bg-[#e5e5e5]" />
        </div>
      </div>
    </section>
  );
}

export default function App() {
  return (
    <div className={UI + " flex h-screen flex-col overflow-hidden bg-[#6c2160]"}>
      <Panel />
      <main className="relative flex min-h-0 flex-1">
        <Wallpaper />
        <Launcher />
        <DesktopIcons />
        <FileManager />
        <Firefox />
      </main>
    </div>
  );
}
